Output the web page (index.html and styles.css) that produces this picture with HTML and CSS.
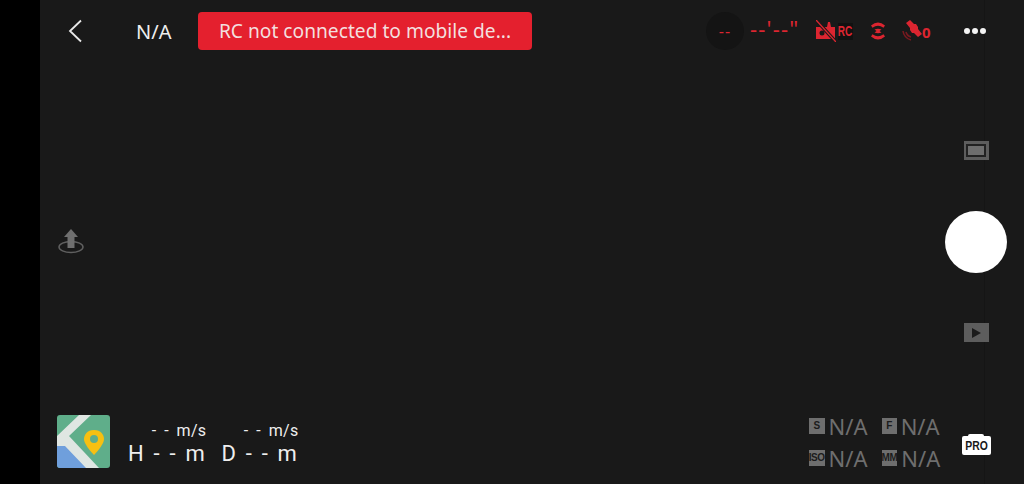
FILE: index.html
```html
<!DOCTYPE html>
<html lang="en">
<head>
<meta charset="utf-8">
<title>Camera view</title>
<link rel="stylesheet" href="styles.css">
</head>
<body>
<div class="strip"></div>
<main class="stage">
  <div class="seam"></div>
  <header class="top">
    <svg class="back" width="16" height="24" viewBox="0 0 16 24"><path d="M14 1.500 3 12l11 10.500" fill="none" stroke="#e8e8e8" stroke-width="1.800"/></svg>
    <span class="mode">N/A</span>
    <div class="alert">RC not connected to mobile de...</div>
    <div class="status">
      <span class="batt">--</span>
      <span class="timer">--'--"</span>
      <svg class="ic-rc" width="20" height="22" viewBox="0 0 20 22">
        <path d="M0 7h11l1-5 2 0 1 5h4v12H0z" fill="#dc2530"/>
        <circle cx="6" cy="13" r="2.500" fill="#191919"/>
        <path d="M0 0l20 22" stroke="#191919" stroke-width="3.500"/>
        <path d="M0 0l20 22" stroke="#dc2530" stroke-width="1.400"/>
      </svg>
      <span class="rc"><span>RC</span></span>
      <svg class="ic-sig" width="16" height="20" viewBox="0 0 16 20">
        <path d="M1 4.500Q8-1.500 15 4.500L13.500 6.800Q8 2.800 2.500 6.800z" fill="#dc2530"/>
        <path d="M4.500 8.500Q8 7 11.500 8.500L9.500 10 11.500 11.500Q8 13 4.500 11.500L6.500 10z" fill="#dc2530"/>
        <path d="M1 15.500Q8 21.500 15 15.500L13.500 13.200Q8 17.200 2.500 13.200z" fill="#dc2530"/>
      </svg>
      <svg class="ic-sat" width="20" height="22" viewBox="0 0 20 22">
        <path d="M1 11q1 7 8 9M4 12q1 4 5 5" fill="none" stroke="#78191f" stroke-width="1.600"/>
        <path d="M4 3l4-3 4 4 2 0 2 3 0 2 4 5-4 3-4-4-2 0-2-3 0-2z" fill="#dc2530"/>
      </svg>
      <span class="sats">0</span>
    </div>
    <div class="more"><i></i><i></i><i></i></div>
  </header>

  <section class="middle">
    <div class="left-rail">
      <svg width="28" height="28" viewBox="0 0 28 28">
        <ellipse cx="14" cy="21" rx="12" ry="5.500" fill="none" stroke="#606060" stroke-width="1.500"/>
        <path d="M14 3l7 8h-3.500v11h-7V11H7z" fill="#6f6f6f"/>
      </svg>
    </div>
    <div class="right-rail">
      <div class="rail-btn frame"><span></span></div>
      <div class="shutter"></div>
      <div class="rail-btn play"><svg width="10" height="10" viewBox="0 0 10 10"><path d="M1 0l9 5-9 5z" fill="#1c1c1c"/></svg></div>
    </div>
  </section>

  <footer class="bottom">
    <svg class="map" width="53" height="53" viewBox="0 0 53 53">
      <rect width="53" height="53" rx="3" fill="#5fae8a"/>
      <path d="M0 29h15l26 24H3a3 3 0 0 1-3-3z" fill="#6f9fdc"/>
      <path d="M0 21 22 0h12L12 21l30 32H29L8 31H0z" fill="#dfe6e2"/>
      <path d="M37 15c-7 0-10 5-10 9 0 6 10 16 10 16s10-10 10-16c0-4-3-9-10-9z" fill="#f6c012"/>
      <circle cx="37" cy="24" r="4" fill="#5fae8a"/>
    </svg>
    <div class="telemetry">
      <div class="tele"><span class="speed">- - m/s</span><span class="dist">H - - m</span></div>
      <div class="tele"><span class="speed">- - m/s</span><span class="dist">D - - m</span></div>
    </div>
    <div class="params">
      <div class="param"><b class="tag">S</b><span>N/A</span></div>
      <div class="param"><b class="tag">F</b><span>N/A</span></div>
      <div class="param"><b class="tag">ISO</b><span>N/A</span></div>
      <div class="param"><b class="tag">MM</b><span>N/A</span></div>
    </div>
    <div class="pro"><span>PRO</span></div>
  </footer>
</main>
</body>
</html>
```
FILE: styles.css
```css
* { box-sizing: border-box; }
html, body { margin: 0; height: 100%; overflow: hidden; }
body {
  display: flex;
  width: 1024px;
  height: 484px;
  background: #000;
  font-family: "Noto Sans", "Open Sans", sans-serif;
  color: #eeeeee;
}
.strip { width: 40px; background: #000; flex: none; }
.stage {
  flex: 1;
  display: flex;
  flex-direction: column;
  background: #191919;
  position: relative;
  z-index: 0;
}
.seam {
  position: absolute;
  z-index: -1;
  top: 0;
  bottom: 0;
  left: 944px;
  width: 1px;
  background: #151515;
}

/* top bar */
.top {
  height: 62px;
  flex: none;
  display: flex;
  align-items: center;
  padding-left: 27px;
}
.back { flex: none; }
.mode { margin-left: 53px; font-size: 20px; width: 35px; white-space: nowrap; }
.alert {
  margin-left: 27px;
  width: 334px;
  height: 38px;
  background: #e4202e;
  border-radius: 4px;
  font-size: 19.200px;
  line-height: 38px;
  text-align: center;
  color: #f3dfdf;
  white-space: nowrap;
}
.status {
  margin-left: 174px;
  display: flex;
  align-items: center;
  color: #dc2530;
}
.batt {
  width: 38px;
  height: 38px;
  border-radius: 50%;
  background: #141414;
  text-align: center;
  line-height: 38px;
  font-size: 16px;
  letter-spacing: 1px;
}
.timer { margin-left: 6px; width: 50px; font-size: 22px; line-height: 1; letter-spacing: 1.200px; white-space: nowrap; margin-top: -6px; }
.ic-rc { margin-left: 16px; flex: none; }
.rc {
  width: 15px;
  height: 17px;
  margin-left: 2px;
  background: #111;
  font-size: 14px;
  line-height: 17px;
  font-weight: 700;
  text-align: center;
  font-family: "Liberation Sans", sans-serif;
  white-space: nowrap;
  display: flex;
  justify-content: center;
}
.rc span { display: block; transform: scaleX(0.72); }
.ic-sig { margin-left: 17px; flex: none; }
.ic-sat { margin-left: 16px; flex: none; }
.sats { font-size: 15px; font-weight: 700; width: 9px; margin-top: 2px; }
.more { margin-left: 33px; display: flex; gap: 2px; }
.more i { width: 6px; height: 6px; border-radius: 50%; background: #f4f4f4; }

/* middle */
.middle {
  flex: 1;
  display: flex;
  justify-content: space-between;
  padding: 0 17px 0 17px;
  min-height: 0;
}
.left-rail { display: flex; align-items: center; margin-top: 5px; }
.right-rail {
  width: 62px;
  padding-top: 79px;
  display: flex;
  flex-direction: column;
  align-items: center;
}
.rail-btn {
  width: 25px;
  height: 19px;
  background: #5d5d5d;
  display: flex;
  align-items: center;
  justify-content: center;
}
.frame span { width: 20px; height: 13px; background: #6e6e6e; border: 2px solid #222; }
.shutter { width: 62px; height: 62px; border-radius: 50%; background: #fff; margin: 51px 0 50px; }

/* bottom */
.bottom {
  height: 72px;
  flex: none;
  display: flex;
  padding-left: 17px;
  padding-top: 3px;
}
.map { flex: none; }
.telemetry { display: flex; gap: 15px; margin-left: 18px; margin-top: 6px; font-family: Roboto, sans-serif; }
.tele { display: flex; flex-direction: column; align-items: flex-end; }
.speed { font-size: 16px; line-height: 20px; word-spacing: 3.500px; letter-spacing: 0.300px; white-space: nowrap; }
.dist { font-size: 22px; line-height: 25px; letter-spacing: 1.700px; word-spacing: 1px; white-space: nowrap; }
.params {
  margin-left: 510px;
  margin-top: -5px;
  display: grid;
  grid-template-columns: 73px 58px;
  grid-auto-rows: 32px;
  color: #6e6e6e;
  font-size: 22px;
}
.param { display: flex; align-items: center; }
.param span { margin-left: 4px; line-height: 1; }
.tag {
  width: 16px;
  height: 16px;
  background: #6e6e6e;
  color: #1c1c1c;
  font-size: 10px;
  line-height: 16px;
  text-align: center;
  font-family: "Liberation Sans", sans-serif;
  white-space: nowrap;
  letter-spacing: -0.500px;
}
.pro {
  margin-left: 22px;
  margin-top: 21px;
  width: 29px;
  height: 19px;
  border-radius: 2px;
  background: #fff;
  color: #191919;
  font-family: "Liberation Sans", sans-serif;
  font-size: 13px;
  font-weight: 700;
  line-height: 19px;
  text-align: center;
  position: relative;
}
.pro span { display: block; transform: scaleX(0.8); }
.pro::before {
  content: "";
  position: absolute;
  top: -2px;
  left: 6px;
  width: 16px;
  height: 3px;
  background: #fff;
  border-radius: 2px 2px 0 0;
}
```
